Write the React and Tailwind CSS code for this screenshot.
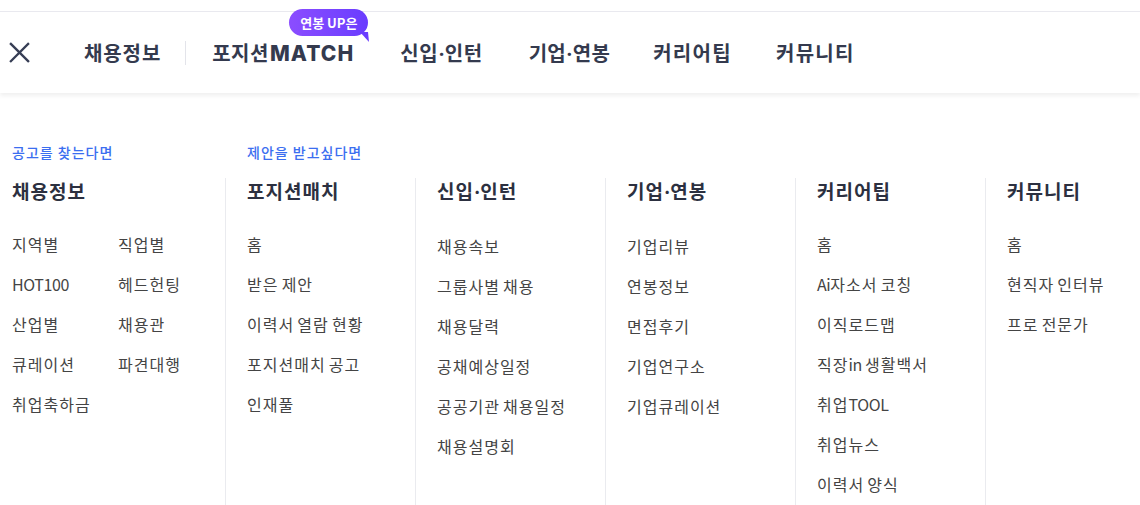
import React from "react";

const font = { fontFamily: '"Noto Sans CJK KR", "Noto Sans", sans-serif' };

const cols = [
  { title: "포지션매치", items: ["홈", "받은 제안", "이력서 열람 현황", "포지션매치 공고", "인재풀"] },
  { title: "신입·인턴", items: ["채용속보", "그룹사별 채용", "채용달력", "공채예상일정", "공공기관 채용일정", "채용설명회"] },
  { title: "기업·연봉", items: ["기업리뷰", "연봉정보", "면접후기", "기업연구소", "기업큐레이션"] },
  { title: "커리어팁", items: ["홈", "Ai자소서 코칭", "이직로드맵", "직장in 생활백서", "취업TOOL", "취업뉴스", "이력서 양식"] },
  { title: "커뮤니티", items: ["홈", "현직자 인터뷰", "프로 전문가"] },
];

const col1 = ["지역별", "직업별", "HOT100", "헤드헌팅", "산업별", "채용관", "큐레이션", "파견대행", "취업축하금"];

const dotFont = { fontFamily: 'Inter, "Noto Sans", sans-serif' };

function T({ text, k, l }) {
  const parts = text.split(/([\x00-\x7F·]+)/).filter((p) => p !== "");
  return (
    <>
      {parts.map((p, i) =>
        /^[\x00-\x7F·]+$/.test(p) ? (
          <span key={i} className={l} style={p.includes("·") ? dotFont : undefined}>
            {p}
          </span>
        ) : (
          <span key={i} className={k}>
            {p}
          </span>
        )
      )}
    </>
  );
}

export default function App() {
  return (
    <div className="w-[1140px] h-[505px] bg-white overflow-hidden" style={font}>
      <div className="h-[12px] border-b border-[#e9e9ef]" />
      <div className="relative h-[81px] flex items-center bg-white shadow-[0_3px_4px_rgba(0,0,0,0.06)]">
        <svg className="ml-[8px] w-[23px] h-[23px]" viewBox="0 0 24 24" fill="none" stroke="#373e55" strokeWidth="2.4" strokeLinecap="square">
          <path d="M3 3L21 21M21 3L3 21" />
        </svg>
        <div className="flex items-center ml-[53px] mt-[1px] text-[20px] leading-[30px] font-bold text-[#343a4e]">
          <span className="tracking-[0.9px]">채용정보</span>
          <span className="ml-[24px] mr-[26px] w-px h-[24px] bg-[#e3e4ea]" />
          <span className="relative whitespace-nowrap">
            <span className="tracking-[0.5px]">포지션</span>
            <span className="ml-[1px] text-[21px] font-extrabold tracking-[1.1px]" style={{ fontFamily: 'Inter, "Noto Sans", sans-serif' }}>MATCH</span>
            <span className="absolute left-[77px] top-[-29px] h-[27px] px-[11px] flex items-center rounded-full text-[13px] leading-[27px] font-bold text-white whitespace-nowrap tracking-[0px] bg-gradient-to-r from-[#8b4dff] to-[#6a3cff]">
              연봉 UP은
              <svg className="absolute right-[-2px] bottom-[-6px] w-[10px] h-[10px]" viewBox="0 0 10 10">
                <path d="M0 0 L8 0 L9 10 Z" fill="#6a3cff" />
              </svg>
            </span>
          </span>
          <span className="ml-[46px]"><T text="신입·인턴" k="tracking-[0.5px]" l="" /></span>
          <span className="ml-[46px]"><T text="기업·연봉" k="tracking-[0.3px]" l="" /></span>
          <span className="ml-[43px] tracking-[1.3px]">커리어팁</span>
          <span className="ml-[44px] tracking-[1.3px]">커뮤니티</span>
        </div>
      </div>

      <div className="flex mt-[49px] text-[14px] font-medium text-[#3b6ef0] tracking-[1px]">
        <div className="w-[247px] pl-[12px]">공고를 찾는다면</div>
        <div>제안을 받고싶다면</div>
      </div>

      <div className="flex mt-[15px]">
        <div className="w-[225px] shrink-0 pl-[12px]">
          <div className="text-[19px] font-bold text-[#2c3040] leading-[26px] tracking-[1px]">채용정보</div>
          <div className="grid grid-cols-[106px_106px] mt-[29px] text-[16px] text-[#444]">
            {col1.map((t) => (
              <div key={t} className="h-[40px] leading-[22px] whitespace-nowrap">
                <T text={t} k="tracking-[1px]" l="tracking-[-0.4px]" />
              </div>
            ))}
          </div>
        </div>
        {cols.map((c) => (
          <div key={c.title} className="w-[190px] shrink-0 border-l border-[#eaebef] pl-[21px] h-[330px]">
            <div className="text-[19px] font-bold text-[#2c3040] leading-[26px] whitespace-nowrap">
              <T text={c.title} k="tracking-[1px]" l="" />
            </div>
            <div className="mt-[29px] text-[16px] text-[#444]">
              {c.items.map((t, i) => (
                <div key={i} className="h-[40px] leading-[22px] whitespace-nowrap">
                  <T text={t} k="tracking-[1px]" l="tracking-[-0.4px]" />
                </div>
              ))}
            </div>
          </div>
        ))}
      </div>
    </div>
  );
}
